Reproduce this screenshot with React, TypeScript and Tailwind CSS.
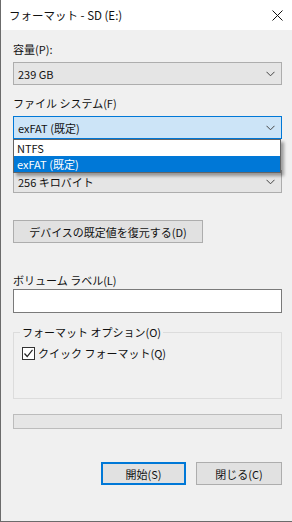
import React from "react";

const Chevron = ({ color = "#444" }: { color?: string }) => (
  <svg width="9" height="6" viewBox="0 0 9 6" className="block">
    <path d="M0.5 0.8 L4.5 4.8 L8.5 0.8" fill="none" stroke={color} strokeWidth="1" />
  </svg>
);

const Combo = ({ text, focused = false }: { text: string; focused?: boolean }) => (
  <div
    className={
      focused
        ? "h-[23px] flex items-center justify-between pl-[4px] pr-[6px] border border-[#0078d7] bg-[#cce4f7]"
        : "h-[23px] flex items-center justify-between pl-[4px] pr-[6px] border border-[#adadad] bg-[#e5e5e5]"
    }
  >
    <span className="leading-[16px]">{text}</span>
    <Chevron />
  </div>
);

export default function App() {
  return (
    <div className="w-[292px] h-[522px] bg-[#f0f0f0] border-l border-b border-[#6b6b6b] flex flex-col text-[11px] leading-[16px] text-[#111] overflow-hidden font-['Noto_Sans_CJK_JP','Noto_Sans',sans-serif]">
      <div className="h-[30px] shrink-0 bg-white flex items-center justify-between pl-[8px] pr-[8px]">
        <span className="text-[11.5px]">フォーマット - SD (E:)</span>
        <svg width="11" height="11" viewBox="0 0 11 11" className="block mr-[1px]">
          <path d="M0.5 0.5 L10.5 10.5 M10.5 0.5 L0.5 10.5" stroke="#111" strokeWidth="1" />
        </svg>
      </div>
      <div className="flex flex-col pl-[12px] pr-[10px]">
        <div className="mt-[11px] h-[16px]">容量(P):</div>
        <div className="mt-[5px]">
          <Combo text="239 GB" />
        </div>
        <div className="mt-[10px] h-[16px]">ファイル システム(F)</div>
        <div className="mt-[5px] relative">
          <Combo text="exFAT (既定)" focused />
          <div className="absolute left-0 right-[1px] top-[23px] z-10 bg-white border border-[#646464] shadow-[3px_3px_3px_rgba(0,0,0,0.35)]">
            <div className="h-[16px] pl-[3px] flex items-center">NTFS</div>
            <div className="h-[16px] pl-[3px] flex items-center bg-[#0078d7] text-white">exFAT (既定)</div>
          </div>
        </div>
        <div className="mt-[10px] h-[16px] invisible">アロケーション ユニット サイズ(A)</div>
        <div className="mt-[5px]">
          <Combo text="256 キロバイト" />
        </div>
        <button className="mt-[27px] h-[23px] w-[190px] border border-[#adadad] bg-[#e1e1e1] flex items-center justify-center">
          デバイスの既定値を復元する(D)
        </button>
        <div className="mt-[29px] h-[16px]">ボリューム ラベル(L)</div>
        <div className="mt-[1px] h-[24px] bg-white border border-[#7a7a7a]"></div>
        <fieldset className="mt-[11px] h-[75px] border border-[#dcdcdc]">
          <legend className="ml-[6px] px-[2px] leading-[16px]">フォーマット オプション(O)</legend>
          <div className="mt-[5px] h-[16px] flex items-center pl-[8px] gap-[3px]">
            <div className="w-[13px] h-[13px] bg-white border border-[#333] flex items-center justify-center">
              <svg width="11" height="11" viewBox="0 0 11 11" className="block">
                <path d="M1.5 5.5 L4.2 8.5 L9.5 1.8" fill="none" stroke="#222" strokeWidth="1.2" />
              </svg>
            </div>
            <span>クイック フォーマット(Q)</span>
          </div>
        </fieldset>
        <div className="mt-[15px] h-[15px] bg-[#e6e6e6] border border-[#bcbcbc]"></div>
        <div className="mt-[33px] flex justify-end gap-[10px]">
          <button className="h-[23px] w-[85px] border-2 border-[#0078d7] bg-[#e1e1e1] flex items-center justify-center">
            開始(S)
          </button>
          <button className="h-[23px] w-[86px] border border-[#adadad] bg-[#e1e1e1] flex items-center justify-center">
            閉じる(C)
          </button>
        </div>
      </div>
    </div>
  );
}
